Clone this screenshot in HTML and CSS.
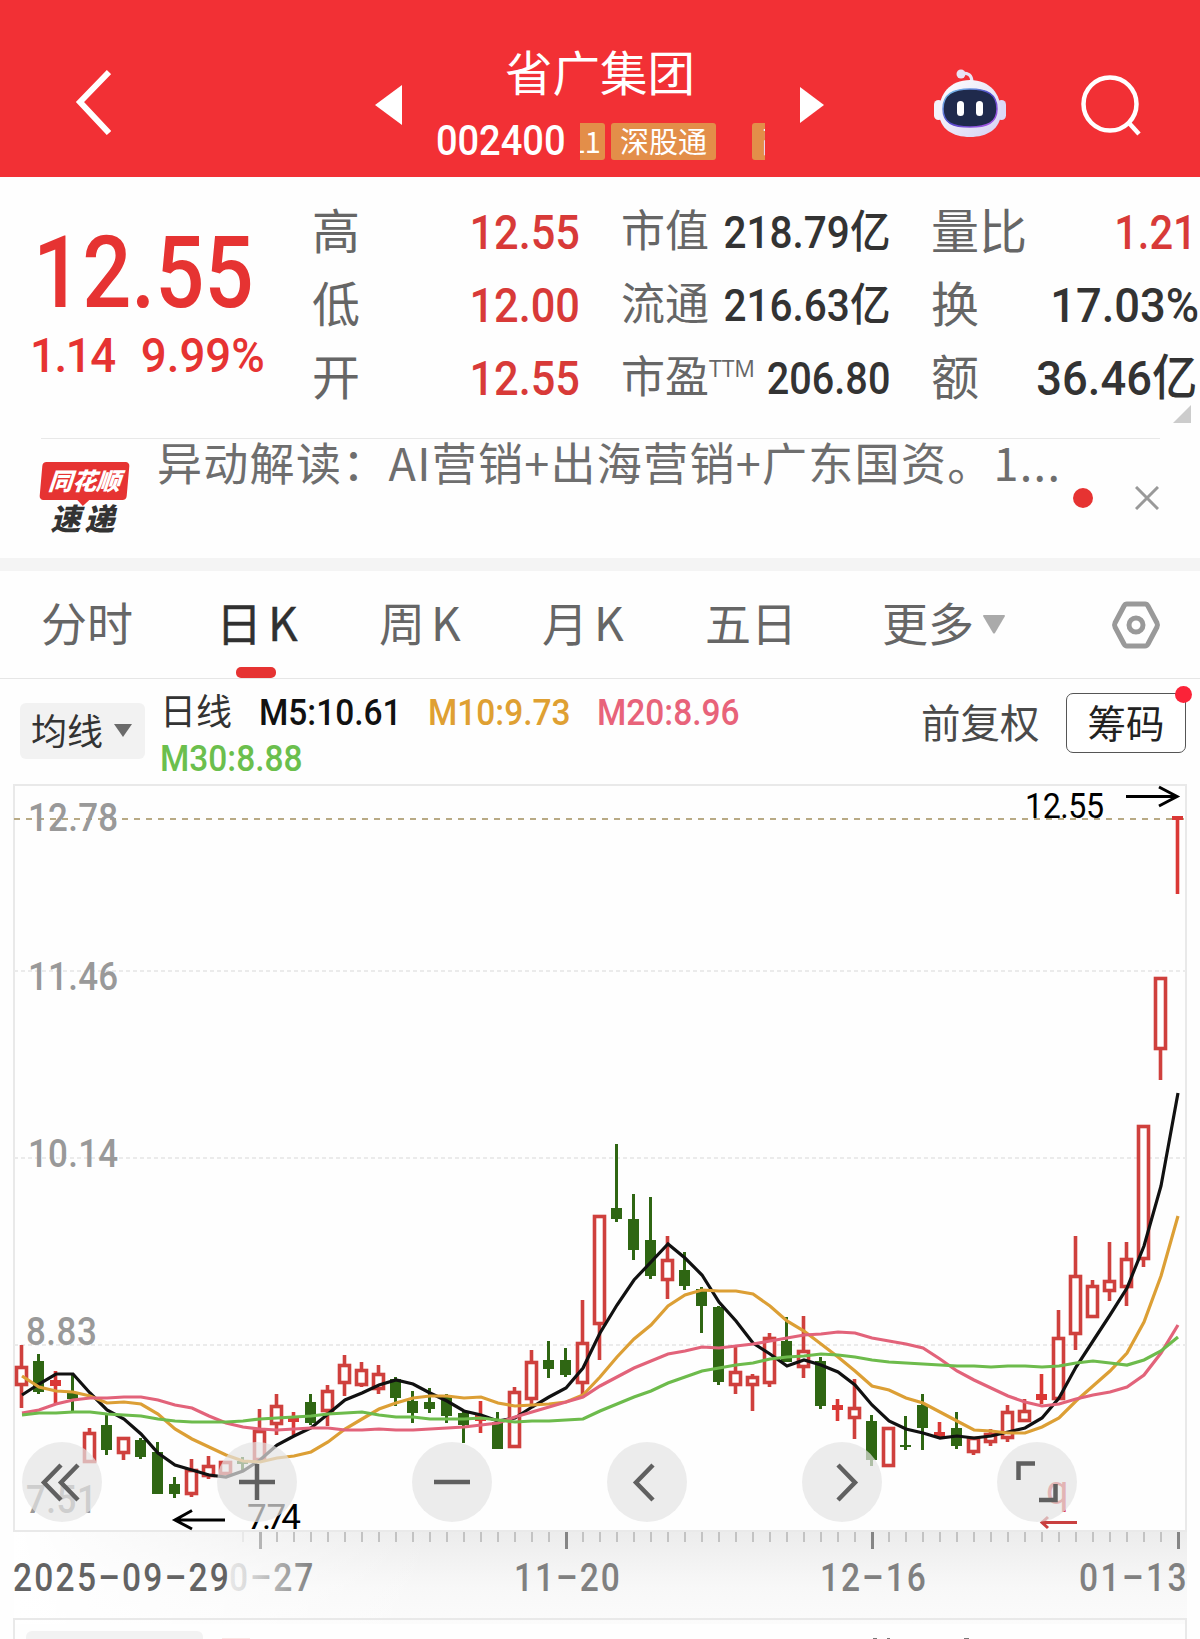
FILE: index.html
```html
<!DOCTYPE html>
<html lang="zh-CN">
<head>
    <meta charset="UTF-8">
    <meta name="viewport" content="width=device-width, initial-scale=1.0">
    <title>省广集团 002400</title>
    <link rel="stylesheet" href="styles.css">
</head>
<body>

<header class="header">
    <svg class="back" width="36" height="66" viewBox="0 0 36 66"><path d="M34 3L5 33L34 64"/></svg>
    <svg class="arrow-prev" width="28" height="40" viewBox="0 0 28 40"><path d="M27 0V40L0 20Z"/></svg>
    <div class="stock">
        <h1>省广集团</h1>
        <div class="stock-info">
            <span class="code">002400</span>
            <div class="tags">
                <span class="tag tag-first">L1</span>
                <span class="tag">深股通</span>
                <span class="tag tag-last">融</span>
            </div>
        </div>
    </div>
    <svg class="arrow-next" width="24" height="36" viewBox="0 0 24 36"><path d="M0 0V36L24 18Z"/></svg>
    <svg class="robot" width="74" height="70" viewBox="0 0 74 70">
        <defs>
            <linearGradient id="shell" x1="0" y1="0" x2="1" y2="1">
                <stop offset="0" stop-color="#fff"/>
                <stop offset=".5" stop-color="#ece9f8"/>
                <stop offset="1" stop-color="#d3d0f5"/>
            </linearGradient>
            <linearGradient id="rim" x1="0" y1="0" x2="1" y2="1">
                <stop offset="0" stop-color="#7fd6f0"/>
                <stop offset=".5" stop-color="#4f46c8"/>
                <stop offset="1" stop-color="#b45ae8"/>
            </linearGradient>
        </defs>
        <path d="M28 4Q39 3 39 13" fill="none" stroke="#e9e4f4" stroke-width="3"/>
        <circle cx="28" cy="5" r="4.500" fill="#e9e4f4"/>
        <rect x="1" y="31" width="9" height="20" rx="4.500" fill="#f4f2fb"/>
        <rect x="64" y="31" width="9" height="20" rx="4.500" fill="#dcd9f7"/>
        <path d="M37 11C57 11 68 25 68 43C68 60 54 68 37 68C20 68 6 60 6 43C6 25 17 11 37 11Z" fill="url(#shell)"/>
        <path d="M37 20C54 20 64 25 64 40C64 54 54 58 37 58C20 58 10 54 10 40C10 25 20 20 37 20Z" fill="#1f2a4c" stroke="url(#rim)" stroke-width="1.500"/>
        <rect x="24" y="32" width="7" height="15" rx="3.500" fill="#fff"/>
        <rect x="43" y="32" width="7" height="15" rx="3.500" fill="#fff"/>
    </svg>
    <svg class="search" width="62" height="62" viewBox="0 0 62 62"><circle cx="29" cy="30" r="26.500"/><path d="M48 49L58 60"/></svg>
</header>

<section class="quote">
    <div class="price">
        <div class="num price-now">12.55</div>
        <div class="price-change"><span class="num">1.14</span><span class="num">9.99%</span></div>
    </div>
    <dl class="stats stats-a">
        <dt>高</dt><dd class="num up">12.55</dd>
        <dt>低</dt><dd class="num up">12.00</dd>
        <dt>开</dt><dd class="num up">12.55</dd>
    </dl>
    <dl class="stats stats-b">
        <dt>市值</dt><dd class="num">218.79亿</dd>
        <dt>流通</dt><dd class="num">216.63亿</dd>
        <dt>市盈<sup>TTM</sup></dt><dd class="num narrow">206.80</dd>
    </dl>
    <dl class="stats stats-c">
        <dt>量比</dt><dd class="num up ratio">1.21</dd>
        <dt>换</dt><dd class="num">17.03%</dd>
        <dt>额</dt><dd class="num amount">36.46亿</dd>
    </dl>
    <svg class="corner" width="18" height="18"><path d="M18 0V18H0Z" fill="#ccc"/></svg>
</section>

<section class="news">
    <div class="news-logo">
        <span class="logo-top">同花顺</span>
        <span class="logo-bottom">速递</span>
    </div>
    <p class="news-text">异动解读：AI营销+出海营销+广东国资。1...</p>
    <span class="dot"></span>
    <svg class="close" width="24" height="24" viewBox="0 0 24 24"><path d="M1 1L23 23M23 1L1 23"/></svg>
</section>

<nav class="tabs">
    <a class="tab">分时</a>
    <a class="tab period active">日K</a>
    <a class="tab period">周K</a>
    <a class="tab period">月K</a>
    <a class="tab">五日</a>
    <a class="tab more">更多<svg width="22" height="19"><path d="M1 0H21Q22 0 22 1L12 18Q11 19 10 18L0 1Q0 0 1 0Z" fill="#aaa"/></svg></a>
    <svg class="settings" width="50" height="48" viewBox="0 0 50 48">
        <path d="M16 3H34Q36 3 37 5L46 22Q47 24 46 26L37 43Q36 45 34 45H16Q14 45 13 43L4 26Q3 24 4 22L13 5Q14 3 16 3Z"/>
        <circle cx="25" cy="24" r="7"/>
    </svg>
</nav>

<section class="legend">
    <button class="ma-btn">均线<svg width="18" height="13"><path d="M0 0H18L9 13Z" fill="#6b6b6b"/></svg></button>
    <div class="ma-list">
        <span class="ma-name">日线</span>
        <span class="num m5">M5:10.61</span>
        <span class="num m10">M10:9.73</span>
        <span class="num m20">M20:8.96</span>
        <span class="num m30">M30:8.88</span>
    </div>
    <span class="adjust">前复权</span>
    <button class="chip-btn">筹码<span class="badge"></span></button>
</section>

<section class="chart">
    <svg id="kline" width="1200" height="855" viewBox="0 784 1200 855">
        <defs>
            <linearGradient id="bandY" x1="0" y1="0" x2="0" y2="1">
                <stop offset="0" stop-color="#ececec"/>
                <stop offset=".6" stop-color="#f8f8f8"/>
                <stop offset="1" stop-color="#fbfbfb"/>
            </linearGradient>
            <linearGradient id="bandX" x1="0" y1="0" x2="1" y2="0">
                <stop offset="0" stop-color="#fff"/>
                <stop offset="1" stop-color="#fff" stop-opacity="0"/>
            </linearGradient>
            <linearGradient id="dateFade" x1="0" y1="0" x2="1" y2="0">
                <stop offset="0" stop-color="#808080" stop-opacity=".15"/>
                <stop offset=".2" stop-color="#808080" stop-opacity=".25"/>
                <stop offset="1" stop-color="#808080"/>
            </linearGradient>
        </defs>

        <!-- date axis background -->
        <rect x="14" y="1532" width="1173" height="92" fill="url(#bandY)"/>
        <rect x="14" y="1532" width="420" height="92" fill="url(#bandX)"/>

        <!-- frame and grid -->
        <path class="frame" d="M14 1532V785H1186V1532M14 1531H1187"/>
        <path class="frame" d="M14 1639V1619H1186V1639"/>
        <path class="grid" d="M14 971H1186M14 1158H1186M14 1345H1186"/>
        <path class="grid-limit" d="M14 819H1186"/>

        <g class="axis">
            <text transform="translate(28 831) scale(.92 1)" textLength="98">12.78</text>
            <text transform="translate(28 990) scale(.92 1)" textLength="98">11.46</text>
            <text transform="translate(28 1167) scale(.92 1)" textLength="98">10.14</text>
            <text transform="translate(26 1345) scale(.92 1)" textLength="77">8.83</text>
            <text transform="translate(26 1513) scale(.92 1)" textLength="77">7.51</text>
        </g>

        <g id="candles"></g>
        <g id="lines"></g>
        <g id="ticks"></g>

        <g class="mark">
            <text transform="translate(1025 818) scale(.92 1)" textLength="86">12.55</text>
            <path d="M1126 796.500H1177M1159 787L1177 796.500L1159 806"/>
            <text x="247" y="1529" textLength="54">7.74</text>
            <path d="M225 1520H175M192 1510.500L175 1520L192 1529"/>
        </g>
        <g class="mark-q">
            <text x="1046" y="1504">q</text>
            <path d="M1077 1522.500H1042M1048 1517L1042 1522.500L1048 1528"/>
        </g>

        <g class="dates">
            <text class="date-fade" transform="translate(229 1591) scale(.86 1)" textLength="98">0–27</text>
            <text transform="translate(514 1591) scale(.86 1)" textLength="123">11–20</text>
            <text transform="translate(820 1591) scale(.86 1)" textLength="123">12–16</text>
            <text transform="translate(1079 1591) scale(.86 1)" textLength="125">01–13</text>
            <text class="date-start" transform="translate(13 1591) scale(.86 1)" textLength="251">2025–09–29</text>
        </g>

        <g class="controls">
            <circle cx="62" cy="1482" r="40"/><path d="M61 1465L44 1482.500L61 1500M78 1465L61 1482.500L78 1500"/>
            <circle cx="257" cy="1482" r="40"/><path d="M239 1482H275M257 1464V1500"/>
            <circle cx="452" cy="1482" r="40"/><path d="M434 1482H470"/>
            <circle cx="647" cy="1482" r="40"/><path d="M653 1465L636 1482.500L653 1500"/>
            <circle cx="842" cy="1482" r="40"/><path d="M838 1465L855 1482.500L838 1500"/>
            <circle cx="1037" cy="1482" r="40"/><path d="M1035 1463.500H1018.500V1480M1055.500 1484V1500H1039"/>
        </g>

        <!-- top of the volume panel -->
        <rect x="26" y="1631" width="177" height="20" rx="6" fill="#f2f2f2"/>
        <rect x="222" y="1638" width="28" height="1" fill="#fbe5e4"/>
        <path d="M873 1638.500H877M887 1638.500H890M964 1638.500H969" stroke="#777"/>
    </svg>
</section>

<script>
    // high, body top, body bottom, low, type: r = hollow up, f = filled up, g = down
    const candles = [
        [1345, 1366, 1386, 1408, 'r'], [1354, 1361, 1392, 1394, 'g'], [1371, 1380, 1386, 1404, 'f'], [1375, 1392, 1399, 1411, 'g'],
        [1428, 1432, 1463, 1463, 'r'], [1415, 1425, 1450, 1455, 'g'], [1437, 1437, 1454, 1460, 'r'], [1438, 1440, 1457, 1459, 'g'],
        [1442, 1452, 1494, 1494, 'g'], [1477, 1484, 1494, 1498, 'g'], [1459, 1469, 1495, 1497, 'r'], [1456, 1465, 1477, 1479, 'r'],
        [1461, 1461, 1475, 1475, 'r'], [1457, 1461, 1464, 1471, 'g'], [1409, 1430, 1461, 1461, 'r'], [1394, 1405, 1425, 1435, 'r'],
        [1412, 1417, 1422, 1435, 'f'], [1394, 1402, 1423, 1425, 'g'], [1385, 1390, 1412, 1426, 'r'], [1355, 1364, 1384, 1396, 'r'],
        [1362, 1369, 1386, 1387, 'r'], [1365, 1373, 1390, 1394, 'r'], [1377, 1379, 1398, 1406, 'g'], [1391, 1401, 1413, 1423, 'g'],
        [1388, 1402, 1409, 1413, 'g'], [1394, 1396, 1416, 1423, 'g'], [1411, 1413, 1425, 1443, 'g'], [1401, 1415, 1421, 1433, 'f'],
        [1412, 1422, 1449, 1449, 'g'], [1387, 1391, 1448, 1448, 'r'], [1350, 1361, 1400, 1404, 'r'], [1341, 1360, 1369, 1378, 'g'],
        [1348, 1360, 1375, 1377, 'g'], [1300, 1342, 1384, 1398, 'r'], [1215, 1215, 1325, 1360, 'r'], [1144, 1208, 1219, 1222, 'g'],
        [1194, 1219, 1250, 1260, 'g'], [1197, 1240, 1276, 1279, 'g'], [1236, 1259, 1281, 1299, 'r'], [1252, 1270, 1286, 1290, 'g'],
        [1287, 1289, 1306, 1333, 'g'], [1306, 1307, 1382, 1385, 'g'], [1345, 1371, 1386, 1394, 'r'], [1374, 1376, 1386, 1411, 'r'],
        [1333, 1337, 1384, 1387, 'r'], [1317, 1341, 1362, 1362, 'g'], [1316, 1350, 1368, 1378, 'r'], [1357, 1361, 1406, 1409, 'g'],
        [1399, 1405, 1410, 1421, 'f'], [1379, 1407, 1419, 1439, 'r'], [1415, 1421, 1460, 1466, 'g'], [1427, 1427, 1467, 1467, 'r'],
        [1416, 1445, 1447, 1450, 'g'], [1394, 1405, 1428, 1450, 'g'], [1422, 1432, 1437, 1437, 'f'], [1412, 1428, 1446, 1449, 'g'],
        [1437, 1437, 1453, 1455, 'r'], [1429, 1433, 1443, 1446, 'r'], [1405, 1411, 1439, 1442, 'r'], [1399, 1410, 1422, 1422, 'r'],
        [1374, 1394, 1400, 1404, 'f'], [1310, 1337, 1400, 1400, 'r'], [1236, 1275, 1335, 1350, 'r'], [1280, 1285, 1318, 1318, 'r'],
        [1242, 1280, 1292, 1301, 'r'], [1242, 1258, 1288, 1306, 'r'], [1125, 1125, 1260, 1267, 'r'], [977, 977, 1050, 1080, 'r'],
        [816, 816, 820, 894, 'f']
    ];

    const averages = {
        '#111111': [1395, 1384, 1374, 1374, 1393, 1410, 1419, 1434, 1453, 1465, 1470, 1475, 1477, 1471, 1460, 1445, 1436, 1428, 1414, 1400, 1393, 1385, 1380, 1384, 1393, 1401, 1411, 1415, 1421, 1418, 1407, 1397, 1388, 1368, 1333, 1305, 1280, 1262, 1244, 1258, 1275, 1302, 1321, 1343, 1354, 1366, 1360, 1365, 1372, 1385, 1405, 1421, 1429, 1433, 1438, 1436, 1438, 1436, 1432, 1428, 1418, 1398, 1367, 1341, 1315, 1288, 1246, 1186, 1093],
        '#dc9f35': [1376, 1387, 1391, 1392, 1396, 1403, 1402, 1404, 1414, 1429, 1439, 1447, 1455, 1461, 1462, 1458, 1456, 1452, 1442, 1429, 1419, 1409, 1403, 1398, 1396, 1396, 1398, 1397, 1403, 1406, 1405, 1404, 1402, 1395, 1377, 1357, 1339, 1325, 1306, 1295, 1290, 1291, 1291, 1294, 1306, 1321, 1331, 1344, 1357, 1371, 1386, 1390, 1398, 1403, 1412, 1421, 1430, 1431, 1433, 1433, 1427, 1418, 1401, 1386, 1371, 1353, 1322, 1276, 1216],
        '#e2637a': [1413, 1410, 1404, 1400, 1398, 1398, 1397, 1397, 1400, 1405, 1408, 1416, 1423, 1427, 1429, 1430, 1429, 1428, 1428, 1430, 1430, 1429, 1430, 1430, 1429, 1428, 1427, 1425, 1423, 1417, 1412, 1407, 1402, 1397, 1386, 1377, 1368, 1361, 1354, 1351, 1347, 1348, 1346, 1344, 1341, 1338, 1335, 1334, 1332, 1333, 1338, 1341, 1344, 1348, 1359, 1371, 1380, 1388, 1396, 1402, 1406, 1404, 1399, 1395, 1392, 1387, 1375, 1353, 1325],
        '#6dbb4c': [1415, 1413, 1413, 1412, 1412, 1414, 1415, 1416, 1419, 1421, 1422, 1422, 1422, 1421, 1419, 1418, 1417, 1416, 1414, 1413, 1412, 1415, 1417, 1417, 1419, 1419, 1419, 1418, 1420, 1422, 1421, 1421, 1420, 1419, 1411, 1404, 1397, 1391, 1383, 1377, 1371, 1368, 1365, 1363, 1359, 1357, 1356, 1354, 1355, 1357, 1360, 1362, 1363, 1364, 1365, 1366, 1366, 1367, 1366, 1366, 1367, 1366, 1363, 1361, 1363, 1365, 1360, 1351, 1337]
    };

    const svgNS = 'http://www.w3.org/2000/svg';
    const step = 17;

    function draw(parent, name, attrs) {
        const el = document.createElementNS(svgNS, name);
        for (const key in attrs) {
            el.setAttribute(key, attrs[key]);
        }
        document.getElementById(parent).appendChild(el);
    }

    candles.forEach(function([high, top, bottom, low, type], i) {
        const x = 21.5 + i * step;
        const color = type === 'g' ? '#2f6613' : type === 'f' ? '#da3835' : '#cf403d';
        draw('candles', 'path', {
            d: `M${x} ${high}V${top}M${x} ${bottom}V${low}`,
            stroke: color, 'stroke-width': type === 'g' ? 3 : 3.6
        });
        if (type === 'r') {
            draw('candles', 'rect', {
                x: x - 5, y: top + 1.5, width: 10, height: bottom - top - 3,
                fill: '#fff', stroke: color, 'stroke-width': 3.6
            });
        } else {
            draw('candles', 'rect', { x: x - 5.5, y: top, width: 11, height: bottom - top, fill: color });
        }
    });

    for (const color in averages) {
        const points = averages[color].map((y, i) => `${22 + i * step},${y}`).join(' ');
        draw('lines', 'polyline', { points: points, stroke: color });
    }

    // Date ticks, a longer one under every labelled day
    for (let i = 13; i < candles.length; i++) {
        const major = (i - 14) % 18 === 0;
        draw('ticks', 'rect', {
            x: 22 + i * step - 1, y: 1532,
            width: major ? 3 : 2, height: major ? 17 : 10,
            fill: i === 13 ? '#e8e8e8' : major ? (i === 14 ? '#b5b5b5' : '#858585') : '#c3c3c3'
        });
    }
</script>

</body>
</html>
```
FILE: styles.css
```css
* {
    box-sizing: border-box;
}
body {
    margin: 0;
    width: 1200px;
    height: 1639px;
    overflow: hidden;
    background-color: #fefefe;
    color: #333;
    font-family: "Noto Sans CJK SC", sans-serif;
}
svg {
    display: block;
    flex: none;
}
button {
    padding: 0;
    font-family: inherit;
}
.num {
    font-family: Roboto, "Noto Sans CJK SC", sans-serif;
    font-weight: 500;
}

/* Header */
.header {
    display: flex;
    height: 177px;
    padding-left: 75px;
    background-color: #f23035;
    color: #fff;
}
.back {
    margin-top: 69px;
    fill: none;
    stroke: #fff;
    stroke-width: 6;
}
.arrow-prev {
    margin: 85px 0 0 264px;
    fill: #fff;
}
.arrow-next {
    margin: 87px 0 0 35px;
    fill: #fff;
}
.stock {
    width: 330px;
    margin-left: 32px;
}
.stock h1 {
    margin: 42px 0 0;
    height: 58px;
    font-size: 47.500px;
    font-weight: 400;
    line-height: 58px;
    text-align: center;
}
.stock-info {
    display: flex;
    align-items: center;
    margin-top: 22px;
    height: 38px;
}
.code {
    width: 145px;
    padding-left: 1px;
    font: 500 42px/40px Roboto, sans-serif;
    transform: scaleX(.905);
    transform-origin: left;
}
.tags {
    display: flex;
    width: 185px;
    overflow: hidden;
}
.tag {
    flex: none;
    width: 105px;
    height: 37px;
    border-radius: 3px;
    background-color: #e38e49;
    font-size: 29px;
    line-height: 34px;
    text-align: center;
}
.tag-first {
    width: 40px;
    margin: 0 6px 0 -15px;
}
.tag-last {
    width: 50px;
    margin-left: 36px;
}
.robot {
    margin: 69px 0 0 109px;
}
.search {
    margin: 74px 0 0 74px;
    fill: none;
    stroke: #fff;
    stroke-width: 4.500;
}

/* Quote */
.quote {
    position: relative;
    display: flex;
    height: 261px;
    padding-top: 18px;
}
.price {
    width: 312px;
    color: #e63332;
}
.price-now {
    margin: 28px 0 0 33px;
    font-size: 100px;
    line-height: 100px;
    transform: scaleX(.865);
    transform-origin: left;
}
.price-change {
    display: flex;
    gap: 28px;
    margin: 5px 0 0 30px;
    font-size: 49px;
    line-height: 56px;
    transform: scaleX(.93);
    transform-origin: left;
    white-space: nowrap;
}
.price-change .num:first-child {
    letter-spacing: -1.500px;
}
.stats {
    display: grid;
    grid-template-columns: auto minmax(0, 1fr);
    grid-auto-rows: 73px;
    height: 219px;
    margin: 0;
    font-size: 48px;
    line-height: 66px;
}
.stats dt {
    color: #666;
    white-space: nowrap;
}
.stats dd {
    justify-self: end;
    margin: 0;
    transform: scaleX(.9);
    transform-origin: right;
    font-size: 49px;
    line-height: 76px;
    white-space: nowrap;
}
.stats .up {
    color: #d83a38;
}
.stats-a {
    width: 268px;
}
.stats-a dd {
    transform: scaleX(.885);
}
.stats-b {
    width: 269px;
    margin-left: 41px;
    font-size: 44px;
}
.stats-b dd {
    font-size: 45px;
}
.stats-b .narrow {
    transform: scaleX(.88);
}
.stats-b sup {
    position: relative;
    top: 0;
    font: 23px/1 "Open Sans", sans-serif;
}
.stats-c {
    width: 269px;
    margin-left: 41px;
}
.stats-c dd {
    padding-right: 1px;
    transform: scaleX(.925);
}
.stats-c .ratio {
    padding-right: 4px;
    transform: scaleX(.85);
}
.stats-c .amount {
    padding-right: 3px;
}
.corner {
    position: absolute;
    right: 9px;
    bottom: 15px;
}

/* News strip */
.news {
    display: flex;
    height: 120px;
    margin: 0 40px 0 41px;
    border-top: 1px solid #e8e8e8;
}
.news-logo {
    width: 87px;
    margin-top: 23px;
    text-align: center;
}
.logo-top, .logo-bottom {
    display: block;
    font-weight: 900;
    font-style: italic;
}
.logo-top {
    position: relative;
    height: 38px;
    border-radius: 4px;
    background-color: #e63332;
    color: #fff;
    font-size: 24px;
    line-height: 36px;
    transform: skewX(-5deg);
}
.logo-top::after {
    content: "";
    position: absolute;
    left: 37px;
    top: 37px;
    border: 7px solid transparent;
    border-top-color: #e63332;
    border-bottom: 0;
}
.logo-bottom {
    margin-top: 0;
    font-size: 30px;
    line-height: 34px;
    letter-spacing: 4px;
}
.news-text {
    width: 916px;
    margin: 0 0 0 29px;
    color: #6e6e6e;
    font-size: 45px;
    line-height: 46px;
    letter-spacing: 1.300px;
    white-space: nowrap;
}
.dot {
    width: 20px;
    height: 20px;
    margin-top: 49px;
    border-radius: 50%;
    background-color: #e63332;
}
.close {
    margin: 47px 0 0 42px;
    fill: none;
    stroke: #999;
    stroke-width: 3;
}

/* Period tabs */
.tabs {
    position: relative;
    display: flex;
    height: 121px;
    padding-left: 41px;
    border-top: 13px solid #f4f4f4;
    border-bottom: 1px solid #e6e6e6;
    color: #666;
    font-size: 46px;
    line-height: 100px;
}
.tab {
    position: relative;
    width: 175px;
    white-space: nowrap;
}
.tab.period {
    width: 163px;
    letter-spacing: 6px;
}
.tab:nth-child(5) {
    width: 177px;
}
.tab.active {
    color: #303030;
    -webkit-text-stroke: .4px #303030;
}
.tab.active::after {
    content: "";
    position: absolute;
    left: 20px;
    bottom: 0;
    width: 40px;
    height: 11px;
    border-radius: 5px;
    background-color: #e63332;
}
.more {
    display: flex;
    gap: 9px;
    width: 229px;
}
.more svg {
    margin-top: 44px;
}
.settings {
    margin-top: 30px;
    fill: none;
    stroke: #999;
    stroke-width: 5;
}

/* Moving average legend */
.legend {
    display: flex;
    height: 105px;
    padding-left: 20px;
}
.ma-btn {
    display: flex;
    align-items: center;
    gap: 11px;
    width: 125px;
    height: 56px;
    margin-top: 24px;
    padding: 0 0 4px 11px;
    border: 0;
    border-radius: 6px;
    background-color: #f2f2f2;
    color: #333;
    font-size: 36px;
    line-height: 50px;
}
.ma-btn svg {
    margin-top: 3px;
}
.ma-list {
    display: flex;
    flex-wrap: wrap;
    align-content: flex-start;
    width: 640px;
    margin: 11px 0 0 15px;
    font-size: 36px;
    line-height: 46px;
}
.ma-list .num {
    width: 169px;
    font-size: 37px;
    white-space: nowrap;
    transform: scaleX(.905);
    transform-origin: left;
}
.ma-name {
    width: 99px;
    line-height: 39px;
}
.m5 { color: #111; }
.m10 { color: #dfa032; }
.m20 { color: #e8637a; }
.m30 { color: #6bbf4d; }
.adjust {
    width: 145px;
    margin-left: 121px;
    color: #4a4a4a;
    font-size: 39.500px;
    line-height: 84px;
}
.chip-btn {
    position: relative;
    width: 120px;
    height: 60px;
    margin-top: 14px;
    border: 1px solid #555;
    border-radius: 7px;
    background-color: #fff;
    color: #222;
    font-size: 38.500px;
    line-height: 50px;
    padding-bottom: 4px;
}
.badge {
    position: absolute;
    right: -7px;
    top: -8px;
    width: 17px;
    height: 17px;
    border-radius: 50%;
    background-color: #fb2338;
}

/* Chart */
.chart text {
    font-family: Roboto, sans-serif;
}
.frame {
    fill: none;
    stroke: #e9e9e9;
    stroke-width: 2;
}
.grid, .grid-limit {
    fill: none;
    stroke: #ebebeb;
    stroke-width: 2;
    stroke-dasharray: 4 3;
}
.grid-limit {
    stroke: #b8aa85;
    stroke-dasharray: 6 6;
}
.axis text {
    fill: #999;
    font-size: 38px;
    font-weight: 500;
}
#lines polyline {
    fill: none;
    stroke-width: 3.200;
}
.mark text {
    font-size: 35px;
}
.mark path, .mark-q path {
    fill: none;
    stroke: #000;
    stroke-width: 3;
}
.mark-q text {
    fill: #dc4444;
    font-size: 40px;
}
.mark-q path {
    stroke: #c94040;
}
.dates text {
    fill: #808080;
    font-size: 39px;
    font-weight: 500;
}
.dates .date-fade {
    fill: url(#dateFade);
}
.dates .date-start {
    fill: #636363;
}
.controls circle {
    fill: #e4e4e4;
    fill-opacity: .7;
}
.controls path {
    fill: none;
    stroke: #606060;
    stroke-width: 4.500;
}
```
